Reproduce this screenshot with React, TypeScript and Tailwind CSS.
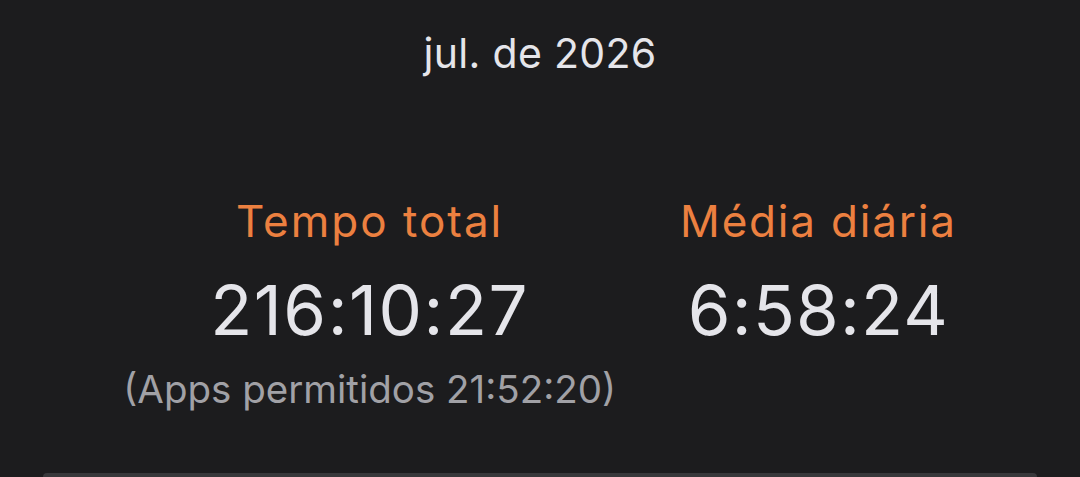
export default function App() {
  return (
    <div
      className="w-[1080px] h-[477px] overflow-hidden bg-[#1c1c1e] flex flex-col items-center"
      style={{ fontFamily: 'Inter, "Noto Sans", sans-serif' }}
    >
      {/* Month */}
      <div className="mt-[29px] text-[41px] leading-[48px] text-[#e5e5ea] tracking-[0.3px]">jul. de 2026</div>

      {/* Totals */}
      <div className="mt-[118px] flex justify-center gap-[64px]">
        <div className="flex flex-col items-center">
          <div className="text-[44px] leading-[52px] tracking-[2px] text-[#ec8040]">Tempo total</div>
          <div className="mt-[25px] text-[69px] leading-[76px] tracking-[1.5px] text-[#e5e5ea]">216:10:27</div>
          <div className="mt-[19px] text-[38.5px] leading-[44px] text-[#a1a1a6]">(Apps permitidos 21:52:20)</div>
        </div>
        <div className="flex flex-col items-center">
          <div className="text-[44px] leading-[52px] tracking-[1.8px] text-[#ec8040]">Média diária</div>
          <div className="mt-[25px] text-[69px] leading-[76px] tracking-[1.2px] text-[#e5e5ea]">6:58:24</div>
        </div>
      </div>

      {/* Next card edge */}
      <div className="mt-auto w-[994px] h-[4px] rounded-t-[6px] bg-[#38383b]" />
    </div>
  );
}
